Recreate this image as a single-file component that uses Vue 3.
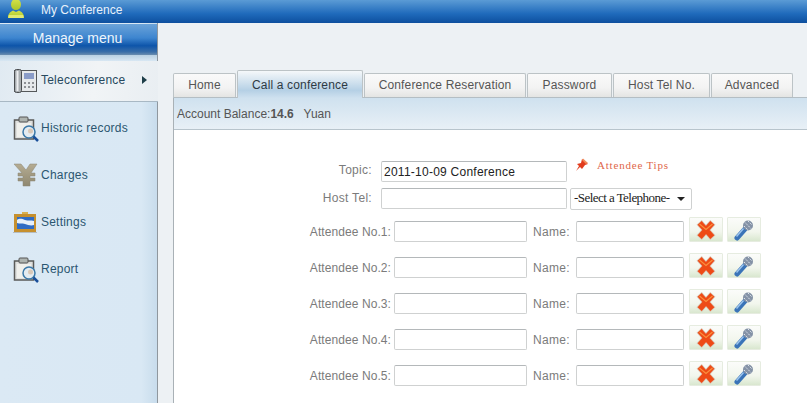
<script setup>
const menu = [
  { label: 'Teleconference', icon: 'phone', active: true },
  { label: 'Historic records', icon: 'clip' },
  { label: 'Charges', icon: 'yen' },
  { label: 'Settings', icon: 'pic' },
  { label: 'Report', icon: 'clip' }
]
const tabs = [
  { label: 'Home', w: 63 },
  { label: 'Call a conference', w: 126, active: true },
  { label: 'Conference Reservation', w: 162 },
  { label: 'Password', w: 85 },
  { label: 'Host Tel No.', w: 97 },
  { label: 'Advanced', w: 82 }
]
const attendees = [1, 2, 3, 4, 5]
</script>

<template>
  <div class="page">
    <header class="top">
      <svg class="user" width="20" height="20" viewBox="0 0 20 20">
        <defs>
          <linearGradient id="ug" x1="0" y1="0" x2="0" y2="1">
            <stop offset="0" stop-color="#d6e24a" />
            <stop offset="1" stop-color="#aac62a" />
          </linearGradient>
        </defs>
        <ellipse cx="9" cy="4.500" rx="5" ry="5.500" fill="url(#ug)" />
        <path d="M1 18c0-5 3-6.500 5-7.500l3 1.500 3-1.500c2 1 5 2.500 5 7.500z" fill="url(#ug)" />
        <path d="M1.200 18c0-1 .2-2 .6-3h14.400c.4 1 .6 2 .6 3z" fill="#e2ea72" />
      </svg>
      <span>My Conference</span>
    </header>
    <div class="body">
      <aside class="side">
        <div class="side-head">Manage menu</div>
        <nav class="side-list">
          <div v-for="m in menu" :key="m.label" class="item" :class="{ on: m.active }">
            <svg class="ico" width="26" height="26" viewBox="0 0 26 26">
              <g v-if="m.icon === 'phone'">
                <rect x="1.500" y="2.500" width="22" height="21" fill="#e6e9eb" stroke="#55585a" />
                <rect x="1.500" y="1.500" width="7" height="23" rx="2" fill="#a8adb0" stroke="#4a4d50" />
                <rect x="3.500" y="3" width="2" height="20" fill="#eceef0" />
                <rect x="11" y="5" width="10" height="6" fill="#8a9cc8" />
                <path d="M11 14h2v2h-2zM15 14h2v2h-2zM19 14h2v2h-2zM11 18h2v2h-2zM15 18h2v2h-2zM19 18h2v2h-2z" fill="#8d9094" />
              </g>
              <g v-else-if="m.icon === 'clip'">
                <rect x="1.500" y="4" width="19" height="19" fill="#dfe0de" stroke="#5a5a58" stroke-width="1.500" />
                <rect x="6" y="1" width="9" height="5" rx="1" fill="#aeb4b0" stroke="#555" />
                <rect x="4" y="7" width="14" height="14" fill="#f0f0ec" />
                <circle cx="16" cy="16" r="6" fill="#e4ebf0" stroke="#3a78a8" stroke-width="1.500" />
                <circle cx="17.500" cy="15" r="2.500" fill="#d8c8b8" />
                <path d="M20.500 20.500l4.500 4.500" stroke="#1a4f9a" stroke-width="2.500" />
              </g>
              <g v-else-if="m.icon === 'yen'">
                <defs>
                  <linearGradient id="yg" x1="0" y1="0" x2="0" y2="1">
                    <stop offset="0" stop-color="#b5ac92" />
                    <stop offset="1" stop-color="#8f8870" />
                  </linearGradient>
                </defs>
                <path d="M1 1h7l5 6 4-6h7l-6 9h4v3h-5v2h5v3h-5v5h-7v-5H5v-3h5v-2H5v-3h4z" fill="url(#yg)" stroke="#8a8676" stroke-width=".5" />
              </g>
              <g v-else>
                <path d="M0 22.500h24" stroke="#b5bcc0" stroke-width="1" />
                <rect x="1" y="4" width="22" height="18" fill="#c6902e" />
                <rect x="4" y="7" width="17" height="12" fill="#2f6cc4" />
                <path d="M4 10c3-2 5-1 8 0s6 0 9 1v4c-3 1-6 0-9-1s-5 0-8-1z" fill="#e6f0fa" />
                <rect x="9" y="2" width="6" height="2" fill="#d9b050" />
              </g>
            </svg>
            <span class="lbl">{{ m.label }}</span>
            <span v-if="m.active" class="arrow"></span>
          </div>
        </nav>
      </aside>
      <main class="main">
        <div class="tabs">
          <div v-for="t in tabs" :key="t.label" class="tab" :class="{ on: t.active }" :style="{ width: t.w + 'px' }">{{ t.label }}</div>
        </div>
        <div class="panel">
          <div class="balance">Account Balance:<b>14.6</b>&nbsp;&nbsp; Yuan</div>
          <div class="form">
            <div class="row first">
              <label class="l1">Topic:</label>
              <input class="wide" value="2011-10-09 Conference" />
              <svg class="pin" width="16" height="16" viewBox="0 0 16 16">
                <path d="M8 2l6 5-3 1-3 4-2-2-4 4 3-5-2-2 4-1z" fill="#e23c1e" />
                <path d="M9 1.500l5 4.500-2 1-4-4z" fill="#f08a5a" />
              </svg>
              <span class="tips">Attendee Tips</span>
            </div>
            <div class="row second">
              <label class="l1 l1b">Host Tel:</label>
              <input class="wide" />
              <div class="select">-Select a Telephone-<i></i></div>
            </div>
            <div v-for="n in attendees" :key="n" class="row att">
              <label class="l2">Attendee No.{{ n }}:</label>
              <input class="num" />
              <label class="l3">Name:</label>
              <input class="name" />
              <button class="btn">
                <svg width="24" height="22" viewBox="0 0 24 22">
                  <path d="M7.500 6l9 10M16.500 6l-9 10" stroke="#d9c4b4" stroke-width="7" stroke-linecap="square" />
                  <path d="M7.500 6l9 10M16.500 6l-9 10" stroke="#ee4a16" stroke-width="5.500" stroke-linecap="square" />
                  <path d="M5.500 5L12 10.500 18.500 5" fill="none" stroke="#fb8f3e" stroke-width="1.200" />
                </svg>
              </button>
              <button class="btn two">
                <svg width="24" height="22" viewBox="0 0 24 22">
                  <path d="M5 19l8-9" stroke="#3a74b8" stroke-width="5" stroke-linecap="round" />
                  <path d="M4.500 17.500l7-8" stroke="#9cc4ec" stroke-width="1.500" />
                  <circle cx="16" cy="6.500" r="5" fill="#8492a6" />
                  <path d="M13 3.500l6 6M16 2l4 4M12 7l4 4" stroke="#e0e6ee" stroke-width="1" stroke-dasharray="1.500 1" />
                </svg>
              </button>
            </div>
          </div>
        </div>
      </main>
    </div>
  </div>
</template>

<style scoped>
.page {
  width: 807px;
  height: 403px;
  overflow: hidden;
  display: flex;
  flex-direction: column;
  font-family: "Liberation Sans", Arial, sans-serif;
  font-size: 12px;
  background: #edf1f4;
}
.top {
  height: 23px;
  box-sizing: border-box;
  padding: 0 0 4px 7px;
  flex: none;
  display: flex;
  align-items: center;
  gap: 14px;
  color: #e8f1fa;
  overflow: hidden;
  background: linear-gradient(#5b9bd5, #1f6abb 60%, #0d4f9e);
}
.body { flex: 1; display: flex; min-height: 0; }
.side {
  width: 157px;
  flex: none;
  border-right: 1px solid #8f979e;
  background: linear-gradient(90deg, #dbe9f4, #d9e8f4 90%, #c8dcec);
}
.side-head {
  height: 31px;
  margin-top: 1px;
  padding-right: 2px;
  box-sizing: border-box;
  line-height: 29px;
  text-align: center;
  color: #eef5fb;
  font-size: 14px;
  background: linear-gradient(#6ba3d9, #3d85cf 45%, #0e55aa 70%, #3a6ea8 90%, #6b8eb0);
}
.side-list {
  display: flex;
  flex-direction: column;
  padding-top: 6px;
  background: linear-gradient(#b8d0e2, #d8e7f3 6px, transparent 6px);
}
.item {
  height: 47px;
  display: flex;
  align-items: center;
  padding-left: 13px;
  box-sizing: border-box;
  color: #2b5670;
  letter-spacing: .22px;
}
.item.on {
  height: 41px;
  padding-bottom: 3px;
  margin-bottom: 2px;
  margin-right: -1px;
  position: relative;
  border-bottom: 1px solid #a8b8c4;
  color: #27495e;
  background: linear-gradient(100deg, #e0eaf2, #f1f4f6 60%, #e9eef2);
}
.ico { flex: none; margin: 3px 2px 0 0; }
.lbl { white-space: nowrap; }
.arrow {
  margin-left: 17px;
  width: 0;
  height: 0;
  border-left: 5px solid #1e3e48;
  border-top: 4px solid transparent;
  border-bottom: 4px solid transparent;
}
.main { flex: 1; min-width: 0; padding: 49px 0 0 15px; display: flex; flex-direction: column; }
.tabs { display: flex; align-items: flex-end; height: 25px; flex: none; border-bottom: 1px solid #b4bec4; box-sizing: content-box; }
.tab {
  height: 24px;
  box-sizing: border-box;
  line-height: 23px;
  text-align: center;
  color: #555;
  letter-spacing: .15px;
  border: 1px solid #bcc3c6;
  border-bottom: 0;
  border-radius: 2px 2px 0 0;
  background: linear-gradient(#fafafa, #f3f3f3 60%, #e4e5e3);
  margin-right: 1px;
  white-space: nowrap;
}
.tab.on {
  height: 28px;
  margin-bottom: -1px;
  line-height: 29px;
  color: #2e3a44;
  background: linear-gradient(#f5f8fa, #b5d0e5 72%, #cfe1ef);
  position: relative;
}
.panel {
  flex: 1;
  min-height: 0;
  border-left: 1px solid #a9b1b6;
  background: #fff;
}
.balance {
  height: 32px;
  box-sizing: border-box;
  line-height: 33px;
  padding-left: 3px;
  color: #555;
  border-bottom: 1px solid #b8c4cc;
  background: linear-gradient(#cfe1ef, #e8f0f6);
}
.form { padding-top: 31px; }
.row { display: flex; align-items: center; height: 21px; color: #7b7b7b; letter-spacing: .15px; }
.second { margin-top: 6px; margin-bottom: 12px; }
.att { margin-bottom: 15px; }
.l1 { width: 198px; text-align: right; margin: -4px 9px 0 0; letter-spacing: .3px; }
.l1b { margin-top: -1px; }
.l2 { width: 217px; text-align: right; margin-right: 3px; white-space: nowrap; letter-spacing: .08px; }
.l3 { width: 37px; margin: 0 6px; white-space: nowrap; letter-spacing: .3px; }
input {
  box-sizing: border-box;
  height: 21px;
  padding: 0 2px;
  border: 1px solid #cfd1d1;
  border-top-color: #b4b8ba;
  border-radius: 2px;
  background: #fff;
  font: 12px "Liberation Sans", Arial, sans-serif;
  letter-spacing: .25px;
  color: #222;
  outline: none;
}
.wide { width: 186px; }
.num { width: 133px; }
.name { width: 108px; }
.pin { margin: -14px 0 0 7px; }
.tips {
  margin: -14px 0 0 7px;
  font: 11px "Liberation Serif", serif;
  letter-spacing: .8px;
  color: #e0664a;
}
.select {
  margin-left: 3px;
  width: 122px;
  height: 22px;
  box-sizing: border-box;
  border: 1px solid #cfd1d1;
  border-radius: 2px;
  position: relative;
  font: 13px/18px "Liberation Serif", serif;
  letter-spacing: -.55px;
  padding-left: 3px;
  color: #222;
}
.select i {
  position: absolute;
  right: 6px;
  top: 8px;
  border-top: 4px solid #222;
  border-left: 4px solid transparent;
  border-right: 4px solid transparent;
}
.btn {
  width: 34px;
  height: 25px;
  align-self: flex-end;
  flex: none;
  margin-left: 5px;
  padding: 0;
  border: 1px solid #e6ece0;
  border-radius: 1px;
  background: linear-gradient(#fbfcfa, #f2f6ed 60%, #d9e7cf);
  display: flex;
  align-items: center;
  justify-content: center;
}
.btn.two { margin-left: 4px; }
</style>
